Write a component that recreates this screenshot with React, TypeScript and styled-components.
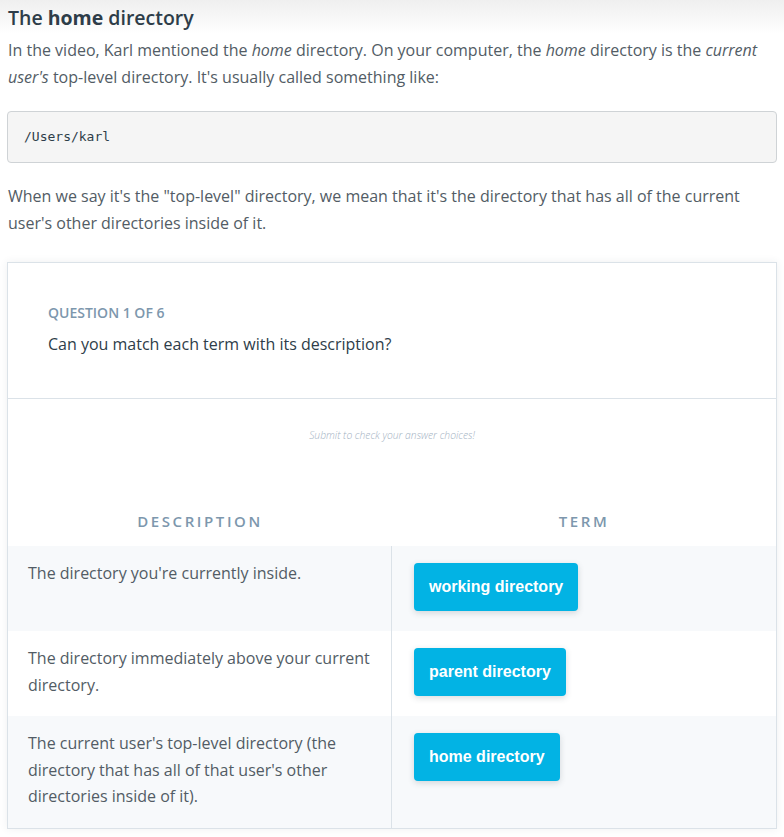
import React from 'react';
import styled, { createGlobalStyle } from 'styled-components';

const GlobalStyle = createGlobalStyle`
  * { box-sizing: border-box; }
  body {
    margin: 0;
    background: linear-gradient(#efefef 0, #fff 34px) no-repeat #fff;
    font-family: "Open Sans", "Noto Sans", sans-serif;
    color: #525c65;
  }
`;

const Page = styled.main`
  padding: 4px 7px 8px 7px;
`;

const Title = styled.h2`
  margin: 0 0 5px 1px;
  font-size: 19.5px;
  line-height: 28px;
  font-weight: 600;
  color: #2e3d49;
  >strong{ font-weight: 700; }
`;

const Para = styled.p`
  margin: 0 0 0 1px;
  font-size: 16px;
  line-height: 27px;
  color: #525c65;
  &.first{ margin-bottom: 20px; }
  &.second{ margin-top: 20px; margin-bottom: 25px; }
`;

const CodeBlock = styled.pre`
  margin: 0;
  background: #f5f5f5;
  border: 1px solid #cfd3d6;
  border-radius: 4px;
  padding: 16px 16px;
  font-family: "DejaVu Sans Mono", "Liberation Mono", monospace;
  font-size: 13px;
  line-height: 18px;
  color: #2e3d49;
`;

const Card = styled.section`
  border: 1px solid #dbe2e8;
  background: #fff;
  box-shadow: 0 0 8px rgba(46,61,73,0.08);
`;

const CardHead = styled.header`
  padding: 40px 40px 42px;
  border-bottom: 1px solid #dbe2e8;
  >.count{
    font-size: 14px;
    line-height: 20px;
    font-weight: 600;
    color: #7d97ad;
    text-transform: uppercase;
    margin-bottom: 9px;
  }
  >.question{
    font-size: 16px;
    line-height: 24px;
    color: #2e3d49;
  }
`;

const Hint = styled.div`
  text-align: center;
  font-size: 10.3px;
  font-style: italic;
  font-weight: 300;
  color: #9fb1c2;
  padding-top: 29px;
  height: 112px;
`;

const MatchTable = styled.div`
  display: grid;
  grid-template-columns: 1fr 1fr;
`;

const ColHead = styled.div`
  text-align: center;
  font-size: 15px;
  font-weight: 600;
  letter-spacing: 2.6px;
  color: #7d97ad;
  line-height: 20px;
  padding-bottom: 15px;
`;

const DescCell = styled.div<{ $shaded: boolean }>`
  background: ${p => (p.$shaded ? '#f7f9fb' : '#fff')};
  border-right: 1px solid #dbe2e8;
  padding: 14px 20px 18px 20px;
  font-size: 16px;
  line-height: 26.5px;
  color: #525c65;
`;

const TermCell = styled.div<{ $shaded: boolean }>`
  background: ${p => (p.$shaded ? '#f7f9fb' : '#fff')};
  padding: 17px 22px 20px 22px;
  display: flex;
  align-items: flex-start;
`;

const TermButton = styled.button`
  border: none;
  border-radius: 4px;
  background: #02b3e4;
  color: #fff;
  font-family: "Liberation Sans", Arial, sans-serif;
  font-weight: 700;
  font-size: 16px;
  line-height: 18px;
  padding: 15px 15px;
  height: 48px;
  box-shadow: 0 2px 6px rgba(46,61,73,0.18);
  cursor: pointer;
`;

const rows = [
  { desc: "The directory you're currently inside.", term: 'working directory' },
  { desc: 'The directory immediately above your current directory.', term: 'parent directory' },
  {
    desc: "The current user's top-level directory (the directory that has all of that user's other directories inside of it).",
    term: 'home directory',
  },
];

export default function App() {
  return (
    <Page>
      <GlobalStyle />
      <Title>The <strong>home</strong> directory</Title>
      <Para className="first">
        In the video, Karl mentioned the <em>home</em> directory. On your computer, the <em>home</em> directory is the{' '}
        <em>current user's</em> top-level directory. It's usually called something like:
      </Para>
      <CodeBlock>/Users/karl</CodeBlock>
      <Para className="second">
        When we say it's the "top-level" directory, we mean that it's the directory that has all of the current
        user's other directories inside of it.
      </Para>
      <Card>
        <CardHead>
          <div className="count">Question 1 of 6</div>
          <div className="question">Can you match each term with its description?</div>
        </CardHead>
        <Hint>Submit to check your answer choices!</Hint>
        <MatchTable>
          <ColHead>DESCRIPTION</ColHead>
          <ColHead>TERM</ColHead>
          {rows.map((r, i) => (
            <React.Fragment key={r.term}>
              <DescCell $shaded={i !== 1}>{r.desc}</DescCell>
              <TermCell $shaded={i !== 1}>
                <TermButton>{r.term}</TermButton>
              </TermCell>
            </React.Fragment>
          ))}
        </MatchTable>
      </Card>
    </Page>
  );
}
